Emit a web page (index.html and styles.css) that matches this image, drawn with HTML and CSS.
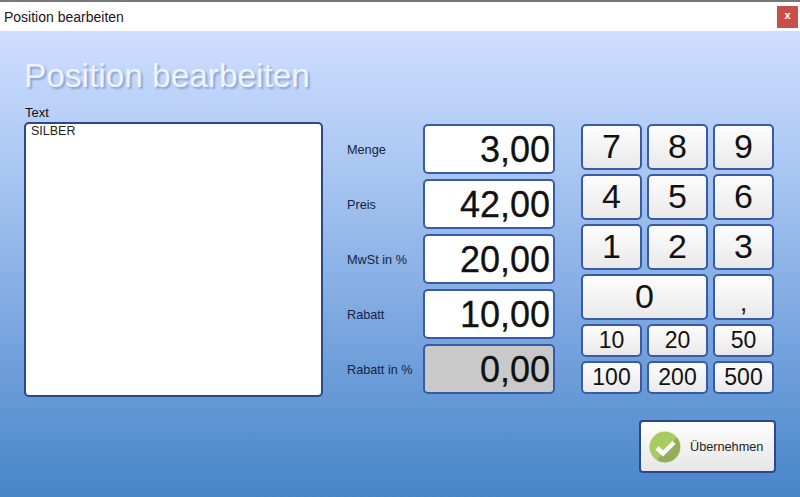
FILE: index.html
```html
<!DOCTYPE html>
<html lang="de">

<head>
    <meta charset="UTF-8">
    <title>Position bearbeiten</title>
    <link rel="stylesheet" href="styles.css">
</head>

<body>
    <div class="titlebar">
        <span class="titlebar-text">Position bearbeiten</span>
        <span class="close">x</span>
    </div>

    <div class="content">
        <h1 class="heading">Position bearbeiten</h1>

        <div class="form">
            <div class="text-col">
                <div class="text-label">Text</div>
                <div class="text-box">SILBER</div>
            </div>

            <div class="fields">
                <div class="field"><span class="field-label">Menge</span><span class="value">3,00</span></div>
                <div class="field"><span class="field-label">Preis</span><span class="value">42,00</span></div>
                <div class="field"><span class="field-label">MwSt in %</span><span class="value">20,00</span></div>
                <div class="field"><span class="field-label">Rabatt</span><span class="value">10,00</span></div>
                <div class="field"><span class="field-label">Rabatt in %</span><span class="value readonly">0,00</span></div>
            </div>

            <div class="keypad">
                <button class="key">7</button>
                <button class="key">8</button>
                <button class="key">9</button>
                <button class="key">4</button>
                <button class="key">5</button>
                <button class="key">6</button>
                <button class="key">1</button>
                <button class="key">2</button>
                <button class="key">3</button>
                <button class="key wide">0</button>
                <button class="key comma">,</button>
                <button class="key small">10</button>
                <button class="key small">20</button>
                <button class="key small">50</button>
                <button class="key small">100</button>
                <button class="key small">200</button>
                <button class="key small">500</button>
            </div>
        </div>

        <div class="actions">
            <button class="confirm">
                <svg class="confirm-icon" width="32" height="32" viewBox="0 0 32 32">
                    <circle cx="16" cy="16" r="15.5" fill="#a9cc62" />
                    <path d="M9 27.5 L28 6.5 A15.5 15.5 0 0 1 9 29.8 Z" fill="#93ad5c" />
                    <path d="M8 17 L14 22.5 L25 11.5" fill="none" stroke="#fff" stroke-width="4.5" />
                </svg>
                <span>Übernehmen</span>
            </button>
        </div>
    </div>
</body>

</html>
```

FILE: styles.css
```css
html,
body {
    height: 100%;
}

body {
    margin: 0;
    display: flex;
    flex-direction: column;
    font-family: "Liberation Sans", Arial, sans-serif;
    color: #111;
    overflow: hidden;
}

.titlebar {
    height: 29px;
    border-top: 2px solid #777;
    background-color: #fff;
    display: flex;
    align-items: center;
    justify-content: space-between;
    padding: 0 2px 0 4px;
    flex-shrink: 0;
}

.titlebar-text {
    font-size: 14px;
    color: #1c1420;
}

.close {
    width: 21px;
    height: 22px;
    margin-top: 1px;
    background-color: #c94f4b;
    color: #fff;
    font-size: 11px;
    font-weight: bold;
    line-height: 19px;
    text-align: center;
}

.content {
    flex: 1;
    background: linear-gradient(#cfdeff 0%, #a9c6f2 30%, #7ca8e0 62%, #4785c9 100%);
    padding: 0 24px;
}

.heading {
    margin: 0;
    padding-top: 25px;
    height: 50px;
    font-size: 33.4px;
    line-height: 40px;
    font-weight: normal;
    color: #eef3ff;
    text-shadow: 2px 2px 2px #8aa4cf;
}

.form {
    display: flex;
    align-items: flex-start;
}

.text-col {
    width: 299px;
}

.text-label {
    font-size: 13px;
    line-height: 14px;
    height: 16px;
    padding-left: 1px;
    box-sizing: border-box;
}

.text-box {
    height: 275px;
    box-sizing: border-box;
    border: 2px solid #2a478f;
    border-radius: 5px;
    background-color: #fff;
    font-size: 12.5px;
    line-height: 13px;
    padding: 1px 0 0 5px;
    color: #222;
}

.fields {
    margin: 18px 0 0 24px;
    display: flex;
    flex-direction: column;
    gap: 5px;
}

.field {
    display: flex;
    align-items: center;
}

.field-label {
    width: 76px;
    padding-top: 2px;
    font-size: 12.7px;
    color: #15233f;
}

.value {
    width: 132px;
    height: 50px;
    box-sizing: border-box;
    border: 2px solid #3a5aa8;
    border-radius: 5px;
    background-color: #fff;
    font-size: 36px;
    line-height: 47px;
    text-align: right;
    padding-right: 3px;
    color: #111;
    -webkit-text-stroke: 0.3px #111;
}

.value.readonly {
    background-color: #c9c9c9;
}

.keypad {
    margin: 18px 0 0 26px;
    display: grid;
    grid-template-columns: repeat(3, 61px);
    grid-template-rows: 46px 46px 46px 46px 33px 33px;
    gap: 4px 5px;
}

.key {
    box-sizing: border-box;
    padding: 0 0 2px 0;
    border: 2px solid #3a5aa8;
    border-radius: 5px;
    background: linear-gradient(#fdfdfd, #e9e9e9);
    font-family: "Liberation Sans", Arial, sans-serif;
    font-size: 34px;
    color: #111;
}

.key.wide {
    grid-column: span 2;
}

.key.comma {
    font-size: 26px;
    padding: 11px 0 0 0;
}

.key.small {
    font-size: 23px;
    padding: 0;
}

.actions {
    display: flex;
    justify-content: flex-end;
    margin-top: 23px;
}

.confirm {
    width: 137px;
    height: 53px;
    box-sizing: border-box;
    padding: 0 0 0 8px;
    display: flex;
    align-items: center;
    gap: 9px;
    border: 2px solid #2a478f;
    border-radius: 4px;
    background: linear-gradient(#fefefe, #e6e6e6);
    font-family: "Liberation Sans", Arial, sans-serif;
    font-size: 12.7px;
    color: #222;
}
```
